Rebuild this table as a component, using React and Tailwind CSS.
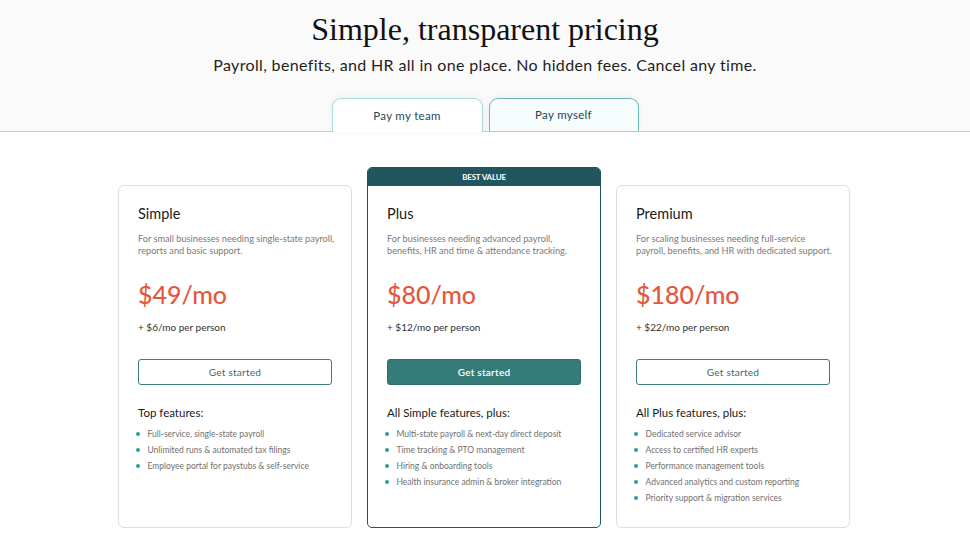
const plans = [
  {
    name: "Simple",
    desc: ["For small businesses needing single-state payroll,", "reports and basic support."],
    price: "$49/mo",
    extra: "+ $6/mo per person",
    heading: "Top features:",
    features: [
      "Full-service, single-state payroll",
      "Unlimited runs & automated tax filings",
      "Employee portal for paystubs & self-service",
    ],
  },
  {
    name: "Plus",
    desc: ["For businesses needing advanced payroll,", "benefits, HR and time & attendance tracking."],
    price: "$80/mo",
    extra: "+ $12/mo per person",
    heading: "All Simple features, plus:",
    featured: true,
    features: [
      "Multi-state payroll & next-day direct deposit",
      "Time tracking & PTO management",
      "Hiring & onboarding tools",
      "Health insurance admin & broker integration",
    ],
  },
  {
    name: "Premium",
    desc: ["For scaling businesses needing full-service", "payroll, benefits, and HR with dedicated support."],
    price: "$180/mo",
    extra: "+ $22/mo per person",
    heading: "All Plus features, plus:",
    features: [
      "Dedicated service advisor",
      "Access to certified HR experts",
      "Performance management tools",
      "Advanced analytics and custom reporting",
      "Priority support & migration services",
    ],
  },
];

function PlanCard({ plan }) {
  const body = (
    <div className="px-[19px] pt-[18px] pb-5 flex flex-col flex-1">
      <h3 className="text-[14.5px] leading-5 text-[#1a1a1a]">{plan.name}</h3>
      <p className="mt-[9px] text-[9.2px] leading-3 text-[#7a7a7a] whitespace-nowrap">
        {plan.desc[0]}
        <br />
        {plan.desc[1]}
      </p>
      <p className="mt-[21px] text-[25px] leading-8 text-[#e4573d] font-medium">{plan.price}</p>
      <p className="mt-[11px] text-[10px] leading-3 text-[#333]">{plan.extra}</p>
      <button
        className={`mt-[26px] h-[26px] rounded-[3px] border text-[10px] tracking-wide ${
          plan.featured
            ? "bg-[#357b79] border-[#2c6c6b] text-white font-semibold"
            : "bg-white border-[#3d7e7e] text-[#2e6f6f]"
        }`}
      >
        Get started
      </button>
      <h4 className="mt-[20px] text-[11.5px] leading-4 text-[#1a1a1a]">{plan.heading}</h4>
      <ul className="mt-[5px] flex flex-col">
        {plan.features.map(f => (
          <li key={f} className="flex items-center h-4 text-[8.5px] text-[#707070]">
            <span className="w-[3.5px] h-[3.5px] rounded-full bg-[#2e9c9c] -ml-[2px] mr-[8px]" />
            {f}
          </li>
        ))}
      </ul>
    </div>
  );

  if (plan.featured) {
    return (
      <div className="w-[234px] h-[361px] rounded-[5px] border border-[#1f5560] bg-white flex flex-col overflow-hidden">
        <div className="h-[18px] bg-[#21565e] text-white text-[8px] font-bold flex items-center justify-center tracking-tight">
          BEST VALUE
        </div>
        {body}
      </div>
    );
  }
  return (
    <div className="w-[234px] h-[343px] rounded-[6px] border border-[#dedede] bg-white flex flex-col">
      {body}
    </div>
  );
}

export default function App() {
  return (
    <div className="w-[970px] h-[545px] bg-white overflow-hidden" style={{ fontFamily: "Lato, 'Noto Sans', sans-serif" }}>
      {/* Header */}
      <div className="bg-[#fafafa] border-b border-[#a3d8d8] flex flex-col items-center">
        <h1 className="mt-[11px] text-[32px] leading-9 text-[#111]" style={{ fontFamily: "'Liberation Serif', serif" }}>
          Simple, transparent pricing
        </h1>
        <p className="mt-[8px] text-[16px] leading-5 text-[#1f1f1f] tracking-[0.35px]">
          Payroll, benefits, and HR all in one place. No hidden fees. Cancel any time.
        </p>
        <div className="mt-[23px] flex gap-[6px] -mb-px">
          <button className="w-[151px] h-[34px] rounded-t-[9px] border border-b-0 border-[#aadbdb] bg-white text-[11.5px] tracking-[0.3px] text-[#1d4a55] shadow-[0_-1px_6px_rgba(0,0,0,0.06)]">
            Pay my team
          </button>
          <button className="w-[150px] h-[33px] rounded-t-[9px] border border-b-0 border-[#6fb4b4] bg-[#f6fbfb] text-[11.5px] tracking-[0.3px] text-[#1d4a55] shadow-[0_-1px_6px_rgba(0,0,0,0.06)]">
            Pay myself
          </button>
        </div>
      </div>

      {/* Plans */}
      <div className="mt-[35px] flex justify-center items-end gap-[15px] pr-[2px]">
        {plans.map(p => (
          <PlanCard key={p.name} plan={p} />
        ))}
      </div>
    </div>
  );
}
